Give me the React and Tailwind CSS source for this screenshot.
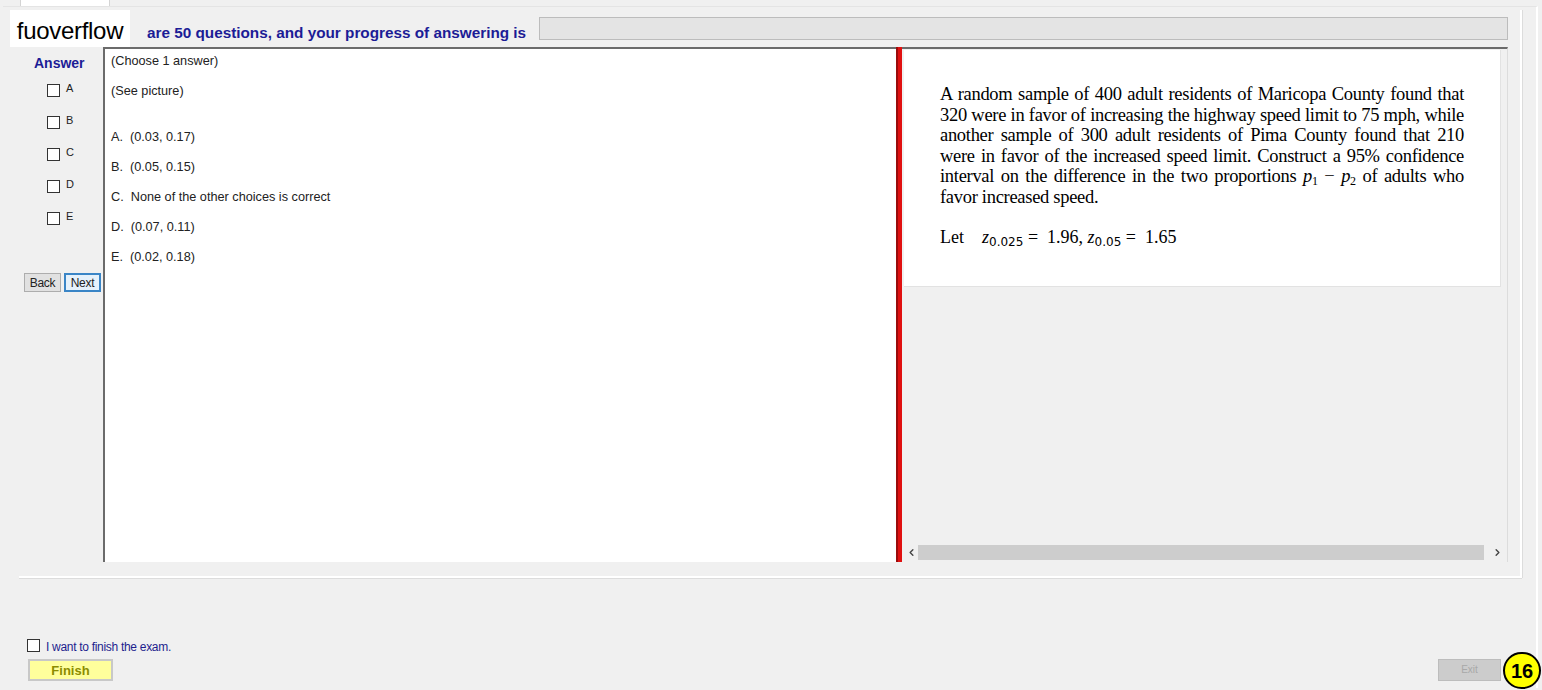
import React from 'react'
import { ChevronLeft, ChevronRight } from 'lucide-react'

const options = [
  { key: 'A', text: '(0.03, 0.17)' },
  { key: 'B', text: '(0.05, 0.15)' },
  { key: 'C', text: 'None of the other choices is correct' },
  { key: 'D', text: '(0.07, 0.11)' },
  { key: 'E', text: '(0.02, 0.18)' },
]

function Box() {
  return <span className="block w-[13px] h-[13px] border border-[#333] bg-white shrink-0" />
}

export default function App() {
  return (
    <div className="w-[1542px] h-[690px] bg-[#f0f0f0] relative overflow-hidden font-['Liberation_Sans',Arial,sans-serif] text-black">
      {/* tab strip */}
      <div className="h-[6px] flex">
        <div className="ml-[20px] w-[90px] h-[6px] bg-white border-x border-[#d4d4d4]" />
      </div>

      {/* main tab page */}
      <div className="ml-[3px] w-[1535px] h-[682px] border-t border-[#e4e4e4] border-r-2 border-r-white flex flex-col">
        {/* group box */}
        <div className="ml-[16px] mt-[3px] w-[1503px] h-[568px] border-b-2 border-r-2 border-white shadow-[0_1px_0_#dcdcdc,1px_0_0_#dcdcdc] flex flex-col">
          <div className="flex items-start h-[23px] mt-[7px]">
            <span className="ml-[128px] mt-[8px] text-[15.3px] leading-[15px] font-bold text-[#1c1c96]">
              are 50 questions, and your progress of answering is
            </span>
            <div className="ml-auto mr-[12px] w-[969px] h-[23px] bg-[#e4e4e4] border border-[#bcbcbc]" />
          </div>

          <div className="flex mt-[7px] ml-[5px] h-[515px]">
            {/* answer column */}
            <div className="w-[79px] flex flex-col pt-[8px]">
              <div className="pl-[10px] text-[14px] leading-[16px] font-bold text-[#1c1c96]">Answer</div>
              <div className="mt-[13px] pl-[23px] flex flex-col gap-[19px]">
                {options.map((o) => (
                  <div key={o.key} className="flex items-start h-[13px]">
                    <Box />
                    <span className="ml-[6px] -mt-[2px] text-[11px] leading-[13px] text-[#222]">{o.key}</span>
                  </div>
                ))}
              </div>
              <div className="mt-[48px] flex gap-[3px]">
                <button className="w-[37px] h-[19px] bg-[#e1e1e1] border border-[#adadad] text-[12px] leading-none text-[#222] tracking-[-0.3px]">Back</button>
                <button className="w-[37px] h-[19px] bg-[#e5f1fb] border-2 border-[#3a85c6] text-[12px] leading-none text-[#222] tracking-[-0.3px]">Next</button>
              </div>
            </div>

            {/* question text */}
            <div className="w-[793px] bg-white border-l-2 border-t-2 border-[#6b6b6b] pl-[6px] pt-[5px] text-[12.7px] leading-[15px] text-[#222]">
              <p>(Choose 1 answer)</p>
              <p className="mt-[15px]">(See picture)</p>
              <div className="mt-[31px] flex flex-col gap-[15px]">
                {options.map((o) => (
                  <p key={o.key}>{o.key}.&nbsp; {o.text}</p>
                ))}
              </div>
            </div>

            {/* splitter */}
            <div className="w-[6px] bg-[#e01010] border-l-2 border-[#9a0c0c]" />

            {/* picture panel */}
            <div className="w-[606px] border-t-2 border-[#6b6b6b] border-r border-r-[#dcdcdc] flex flex-col">
              <div className="ml-[2px] mt-[1px] w-[597px] h-[237px] bg-white border-r border-b border-[#e2e2e2] pl-[36px] pt-[34px]">
                <p className="w-[524px] text-justify text-[18.5px] leading-[20.5px] font-['Liberation_Serif','Times_New_Roman',serif] tracking-[-0.3px]">
                  A random sample of 400 adult residents of Maricopa County found that 320 were in favor of increasing the highway speed limit to 75 mph, while another sample of 300 adult residents of Pima County found that 210 were in favor of the increased speed limit. Construct a 95% confidence interval on the difference in the two proportions{' '}
                  <i>p</i><sub className="text-[12px] not-italic">1</sub> − <i>p</i><sub className="text-[12px]">2</sub> of adults who favor increased speed.
                </p>
                <p className="mt-[20px] text-[18px] leading-[20px] font-['Liberation_Serif','Times_New_Roman',serif]">
                  Let&nbsp;&nbsp;&nbsp; <i>z</i><sub className="text-[12px] font-['DejaVu_Sans',sans-serif]">0.025</sub> =&nbsp; 1.96,&nbsp;<i>z</i><sub className="text-[12px] font-['DejaVu_Sans',sans-serif]">0.05</sub> =&nbsp; 1.65
                </p>
              </div>

              {/* horizontal scrollbar */}
              <div className="mt-auto mb-[2px] ml-[2px] w-[601px] h-[16px] bg-[#f0f0f0] flex items-center">
                <span className="w-[14px] flex justify-center text-[#444]">
                  <ChevronLeft size={11} strokeWidth={3} />
                </span>
                <div className="w-[566px] h-[15px] bg-[#cdcdcd]" />
                <span className="ml-auto w-[16px] flex justify-center text-[#444]">
                  <ChevronRight size={11} strokeWidth={3} />
                </span>
              </div>
            </div>
          </div>
        </div>

        {/* bottom area */}
        <div className="flex-1 flex items-end pb-[7px]">
          <div className="ml-[24px] flex flex-col">
            <div className="flex items-center">
              <Box />
              <span className="ml-[6px] mt-[5px] text-[12px] leading-[15px] text-[#1e1e8e] tracking-[-0.3px]">I want to finish the exam.</span>
            </div>
            <button className="mt-[4px] ml-[1px] w-[85px] h-[22px] bg-[#ffff9c] border-2 border-[#c8c8c8] text-[13px] font-bold text-[#8c8c00] leading-none">
              Finish
            </button>
          </div>
          <button className="ml-auto mr-[35px] w-[63px] h-[22px] bg-[#cccccc] border border-[#bdbdbd] text-[10px] text-[#a8a8a8] leading-none">
            Exit
          </button>
        </div>
      </div>

      {/* watermark */}
      <div className="absolute left-[10px] top-[10px] w-[120px] h-[37px] bg-white flex items-center justify-center pt-[4px] text-[24px] text-black tracking-[-0.3px]">
        fuoverflow
      </div>

      {/* counter badge */}
      <div className="absolute left-[1503px] top-[652px] w-[38px] h-[37px] rounded-full bg-[#ffff00] border-2 border-black flex items-center justify-center text-[20px] font-bold leading-none">
        16
      </div>
    </div>
  )
}
